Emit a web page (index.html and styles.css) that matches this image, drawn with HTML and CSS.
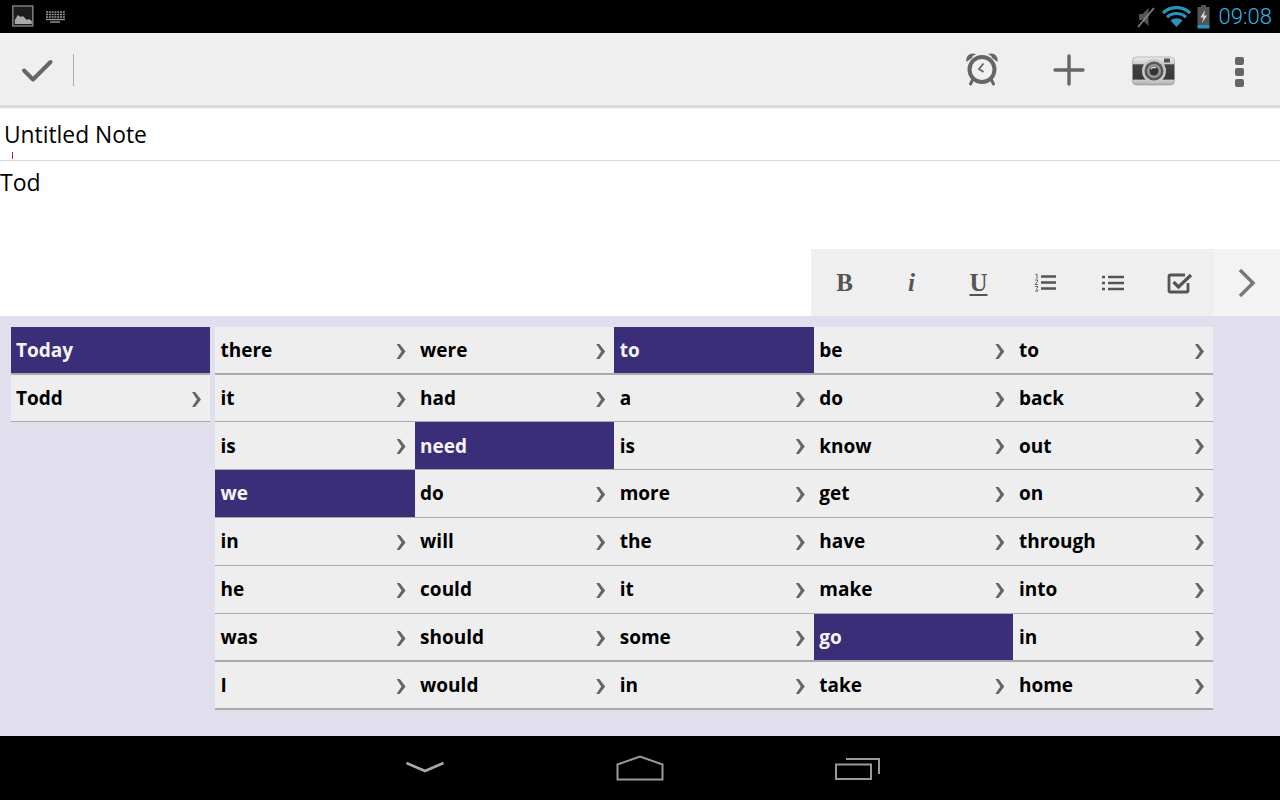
FILE: index.html
```html
<!DOCTYPE html>
<html lang="en">
<head>
<meta charset="utf-8">
<title>Untitled Note</title>
<link rel="stylesheet" href="styles.css">
</head>
<body>
<div class="screen">
  <header class="status">
    <div class="status-left">
      <svg class="ic-pic" width="24" height="23" viewBox="0 0 24 23"><rect x="1.800" y="1" width="20" height="20" fill="#1c1c1c" stroke="#777" stroke-width="1.600"/><path d="M3.800 19v-4l3-5 3 2 2-1 4 4 2-1 3 2v3z" fill="#aaa"/></svg>
      <svg class="ic-kb" width="22" height="12" viewBox="0 0 22 12"><path d="M1 1h19M1 3.500h19M1 6h19" stroke="#999" stroke-width="1.600" stroke-dasharray="2 .8" fill="none"/><path d="M1 8.500h19" stroke="#999" stroke-width="1.400" fill="none"/><path d="M5 11h10" stroke="#999" stroke-width="1.400"/></svg>
    </div>
    <div class="status-right">
      <svg width="20" height="24" viewBox="0 0 20 24"><path d="M3 9h3.500l6-6v18l-6-6H3z" fill="#555"/><path d="M2 22 18 3" stroke="#888" stroke-width="1.600"/></svg>
      <svg class="ic-wifi" width="29" height="21" viewBox="0 0 29 21"><path d="M1 7a19.500 19.500 0 0 1 27 0" fill="none" stroke="#2a93bb" stroke-width="3.200"/><path d="M5 11.200a14 14 0 0 1 19 0" fill="none" stroke="#2a93bb" stroke-width="3.200"/><path d="M8.500 14.500a9 9 0 0 1 12 0L14.500 21z" fill="#2a93bb"/></svg>
      <svg class="ic-batt" width="13" height="24" viewBox="0 0 13 24"><path d="M4 0h5v2H4z" fill="#555"/><rect x="0.500" y="2" width="12" height="18" fill="#555"/><rect x="0.500" y="20" width="12" height="3.500" fill="#2a93bb"/><path d="M8 5 3.500 12.500h3L5 18 10 10.500H7z" fill="#ddd"/></svg>
      <span class="clock">09:08</span>
    </div>
  </header>

  <div class="actionbar">
    <div class="done">
      <svg width="34" height="28" viewBox="0 0 34 28"><path d="M4 14.500 13 23.500 30.500 6" fill="none" stroke="#666" stroke-width="4" stroke-linecap="round" stroke-linejoin="round"/></svg>
      <span class="divider"></span>
    </div>
    <div class="actions">
      <svg class="act" width="36" height="36" viewBox="0 0 36 36"><path d="M2.500 11C1 4 8 .5 12.500 3.500zM33.500 11C35 4 28 .5 23.500 3.500z" fill="#666"/><circle cx="18" cy="18.500" r="12.500" fill="#f0f0f0" stroke="#666" stroke-width="4"/><path d="M8.500 6a15 15 0 0 1 19 0" stroke="#efefef" stroke-width="1.200" fill="none"/><path d="M9 28 6.500 33M27 28 29.500 33" stroke="#666" stroke-width="3" stroke-linecap="round"/><path d="M19.500 12.500 15 18l4.500 3" fill="none" stroke="#666" stroke-width="1.800"/></svg>
      <svg class="act" width="32" height="32" viewBox="0 0 32 32"><path d="M16 2v28M2 16h28" stroke="#666" stroke-width="3.400" stroke-linecap="round"/></svg>
      <svg class="act" width="44" height="30" viewBox="0 0 44 30"><defs><linearGradient id="cam" x1="0" y1="0" x2="0" y2="1"><stop offset="0" stop-color="#eee"/><stop offset=".24" stop-color="#ccc"/><stop offset=".28" stop-color="#444"/><stop offset=".78" stop-color="#383838"/><stop offset=".84" stop-color="#ccc"/><stop offset="1" stop-color="#aaa"/></linearGradient></defs><rect x="0.500" y="1" width="42" height="28" rx="4" fill="url(#cam)" stroke="#999" stroke-width=".6"/><rect x="32" y="2.500" width="6" height="4" fill="#555"/><circle cx="22" cy="15" r="12" fill="#c8c8c8"/><circle cx="22" cy="15" r="9.500" fill="#555"/><circle cx="22" cy="15" r="7" fill="#999"/><circle cx="22" cy="15" r="4.500" fill="#333"/><path d="M19 13a4 4 0 0 1 5-1" stroke="#eee" stroke-width="1.200" fill="none"/></svg>
      <svg class="act" width="10" height="30" viewBox="0 0 10 30"><rect x="0" y="0" width="9" height="8" rx="2" fill="#666"/><rect x="0" y="11" width="9" height="8" rx="2" fill="#666"/><rect x="0" y="22" width="9" height="8" rx="2" fill="#666"/></svg>
    </div>
  </div>

  <div class="editor">
    <div class="title-row">
      <span class="title">Untitled Note</span>
      <span class="cursor"></span>
    </div>
    <div class="body-row">
      <div class="body-text">Tod</div>
      <div class="format">
        <span class="fmt fmt-b">B</span>
        <span class="fmt fmt-i">i</span>
        <span class="fmt fmt-u">U</span>
        <span class="fmt"><svg width="24" height="20" viewBox="0 0 24 20"><path d="M7 3.500h15M7 9.500h15M7 15.500h15" stroke="#555" stroke-width="2.400"/><path d="M1.500 1.500 3 1v5M1 7h2.500v1.500L1 11.500h3M1 13.500h3l-1.500 2 1.500 2.500H1" stroke="#666" stroke-width="1" fill="none"/></svg></span>
        <span class="fmt"><svg width="22" height="16" viewBox="0 0 22 16"><path d="M6 2h16M6 8h16M6 14h16" stroke="#555" stroke-width="2.400"/><path d="M0 2h3M0 8h3M0 14h3" stroke="#555" stroke-width="2.400"/></svg></span>
        <span class="fmt"><svg width="26" height="22" viewBox="0 0 26 22"><path d="M21 11v7.500a1.500 1.500 0 0 1-1.500 1.500h-16A1.500 1.500 0 0 1 2 18.500v-14A1.500 1.500 0 0 1 3.500 3H18" fill="none" stroke="#555" stroke-width="2.800"/><path d="M6.500 10l5 5L24 3" fill="none" stroke="#555" stroke-width="3.200"/></svg></span>
        <span class="fmt fmt-next"><svg width="18" height="30" viewBox="0 0 18 30"><path d="M2 2 15 15 2 28" fill="none" stroke="#777" stroke-width="3.400"/></svg></span>
      </div>
    </div>
  </div>

  <main class="panel">
    <ul class="list side">
      <li class="cell thick on">Today</li>
      <li class="cell">Todd</li>
    </ul>
    <ul class="list words">
      <li class="cell thick">there</li><li class="cell thick">were</li><li class="cell thick on">to</li><li class="cell thick">be</li><li class="cell thick">to</li>
      <li class="cell">it</li><li class="cell">had</li><li class="cell">a</li><li class="cell">do</li><li class="cell">back</li>
      <li class="cell">is</li><li class="cell on">need</li><li class="cell">is</li><li class="cell">know</li><li class="cell">out</li>
      <li class="cell up on">we</li><li class="cell up">do</li><li class="cell up">more</li><li class="cell up">get</li><li class="cell up">on</li>
      <li class="cell up">in</li><li class="cell up">will</li><li class="cell up">the</li><li class="cell up">have</li><li class="cell up">through</li>
      <li class="cell up">he</li><li class="cell up">could</li><li class="cell up">it</li><li class="cell up">make</li><li class="cell up">into</li>
      <li class="cell thick">was</li><li class="cell thick">should</li><li class="cell thick">some</li><li class="cell thick on">go</li><li class="cell thick">in</li>
      <li class="cell thick">I</li><li class="cell thick">would</li><li class="cell thick">in</li><li class="cell thick">take</li><li class="cell thick">home</li>
    </ul>
  </main>

  <footer class="navbar">
    <svg width="40" height="14" viewBox="0 0 40 14"><path d="M1.500 2 20 10 38.500 2" fill="none" stroke="#aaa" stroke-width="2.600"/></svg>
    <svg width="48" height="26" viewBox="0 0 48 26"><path d="M1.500 24.500V9.500L24 1.500 46.500 9.500V24.500z" fill="none" stroke="#999" stroke-width="2"/></svg>
    <svg width="46" height="24" viewBox="0 0 46 24"><path d="M1 8.500h35v14.500H1z" fill="none" stroke="#999" stroke-width="2"/><path d="M11 3h33v15" fill="none" stroke="#999" stroke-width="2"/></svg>
  </footer>
</div>
</body>
</html>
```
FILE: styles.css
```css
* { box-sizing: border-box; }
html, body { margin: 0; padding: 0; }
body { background: #000; font-family: Roboto, "Liberation Sans", sans-serif; }
.screen { width: 1280px; height: 800px; display: flex; flex-direction: column; overflow: hidden; background: #fff; }

.status { height: 33px; flex: none; background: #000; display: flex; justify-content: space-between; align-items: center; padding: 0 8px 0 11px; }
.status-left { display: flex; align-items: center; gap: 10px; }
.status-right { display: flex; align-items: center; }
.ic-wifi { margin-left: 6px; }
.ic-batt { margin-left: 6px; }
.clock { color: #33b5e5; font-size: 22px; margin-left: 9px; font-weight: 300; }

.actionbar { height: 76px; flex: none; background: linear-gradient(#f3f3f3, #efefef 8px, #efefef 71px, #e4e4e4 72.500px, #d2d2d2 73.500px, #e8e8e8 75px, #fafafa 76px); display: flex; justify-content: space-between; align-items: center; padding: 2px 35px 0 20px; }
.done { display: flex; align-items: center; gap: 19px; margin-bottom: 5px; }
.divider { width: 1px; height: 32px; background: #aaa; }
.actions { display: flex; align-items: center; }
.actions .act:nth-child(1) { margin-bottom: 7px; }
.actions .act:nth-child(2) { margin-left: 53px; margin-bottom: 4px; }
.actions .act:nth-child(3) { margin-left: 47px; margin-bottom: 3px; }
.actions .act:nth-child(4) { margin-left: 59px; }

.editor { height: 207px; flex: none; display: flex; flex-direction: column; background: #fff; }
.title-row { position: relative; height: 52px; flex: none; border-bottom: 1px solid #d8d8d8; padding: 10px 0 0 4px; }
.title { font-family: "Open Sans", sans-serif; font-size: 22.800px; color: #000; line-height: 32px; }
.cursor { position: absolute; left: 12px; bottom: 1px; width: 1px; height: 7px; background: #b0124f; }
.body-row { flex: 1; display: flex; flex-direction: column; justify-content: space-between; }
.body-text { font-family: "Open Sans", sans-serif; font-size: 23px; color: #000; line-height: 32px; padding-top: 5px; }
.format { align-self: flex-end; width: 469px; height: 67px; background: #efefef; display: flex; align-items: center; }
.fmt { width: 67.300px; display: flex; justify-content: center; align-items: center; color: #555; font-family: "Liberation Serif", serif; font-size: 25px; font-weight: 700; line-height: 1; }
.fmt-i { font-style: italic; }
.fmt-u { text-decoration: underline; text-underline-offset: 3px; }
.fmt-next { height: 67px; background: #f3f3f3; }

.panel { height: 420px; flex: none; background: #e1dfed; display: flex; gap: 5px; padding: 11px 0 0 11px; align-items: flex-start; }
.list { list-style: none; margin: 0; padding: 0; }
.side { width: 199px; display: grid; grid-template-rows: 48px 47px; }
.words { width: 998px; display: grid; grid-template-columns: repeat(5, 1fr); grid-template-rows: 48px 47px repeat(6, 48px); }
.cell { position: relative; background: #eee; border-bottom: 1px solid #aaa; padding-left: 5.500px; font-family: "Open Sans", sans-serif; font-size: 19px; font-weight: 700; color: #000; line-height: 46px; display: flex; align-items: center; }
.side .cell { padding-left: 5px; }
.cell.thick { border-bottom-width: 2px; }
.cell.up { padding-bottom: 1px; }
.cell::after { content: ""; position: absolute; right: 9px; top: 17px; width: 9px; height: 15px; background: #666; clip-path: polygon(0 0, 35% 0, 100% 50%, 35% 100%, 0 100%, 55% 50%); }
.cell.on { background: #3a2e78; color: #f4f4f4; }
.cell.on::after { display: none; }

.navbar { height: 64px; flex: none; background: #000; display: flex; align-items: center; justify-content: center; gap: 171px; padding-left: 5px; }
```
